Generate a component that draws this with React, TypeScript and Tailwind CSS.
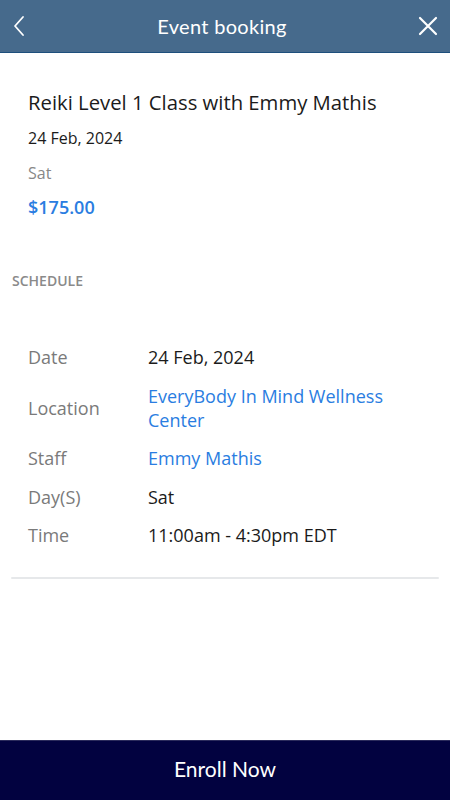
const rows = [
  { label: 'Date', value: '24 Feb, 2024' },
  { label: 'Location', value: 'EveryBody In Mind Wellness Center', link: true },
  { label: 'Staff', value: 'Emmy Mathis', link: true },
  { label: 'Day(S)', value: 'Sat' },
  { label: 'Time', value: '11:00am - 4:30pm EDT' },
];

export default function App() {
  return (
    <main className="flex h-[800px] w-[450px] flex-col bg-white font-['Open_Sans',sans-serif] text-[#1b1b1b]">
      <header className="flex h-[53px] shrink-0 items-center justify-between border-b border-[#1d4f7c] bg-[#466a8c] px-3 text-white">
        <svg width="14" height="22" viewBox="0 0 14 22" fill="none" stroke="white" strokeWidth="1.8" strokeLinecap="round" strokeLinejoin="round">
          <path d="M11 2 L3 11 L11 20" />
        </svg>
        <h1 className="font-['Lato',sans-serif] text-[20px] tracking-[0.3px]">Event booking</h1>
        <svg width="20" height="20" viewBox="0 0 20 20" fill="none" stroke="white" strokeWidth="2.2" strokeLinecap="round">
          <path d="M2 2 L18 18 M18 2 L2 18" />
        </svg>
      </header>

      <section className="px-7 pt-[35px]">
        <h2 className="text-[20.3px] leading-[28px]">Reiki Level 1 Class with Emmy Mathis</h2>
        <p className="mt-[12px] text-[16px] leading-[20px]">24 Feb, 2024</p>
        <p className="mt-[15px] text-[16px] leading-[20px] text-[#888]">Sat</p>
        <p className="mt-[13px] text-[18px] font-semibold leading-[22px] text-[#2a7de1]">$175.00</p>
      </section>

      <p className="mt-[54px] px-3 text-[14px] font-semibold leading-[18px] text-[#8a8a8a]">SCHEDULE</p>

      <div className="mt-[55px] flex flex-col gap-[14.5px] px-7">
        {rows.map((row) => (
          <div className="flex items-center text-[18px] leading-[24px]" key={row.label}>
            <span className="w-[120px] shrink-0 text-[#7a7a7a]">{row.label}</span>
            <span className={row.link ? 'pr-5 text-[#2a7de1]' : 'pr-5'}>{row.value}</span>
          </div>
        ))}
      </div>

      <div className="mx-[11px] mt-[30px] h-[2px] rounded bg-[#e6e8ea]" />

      <div className="flex-1" />
      <button className="flex h-[60px] shrink-0 items-center justify-center border-t border-[#2b2b5c] bg-[#020240] pb-[4px] font-['Lato',sans-serif] text-[21px] text-white">
        Enroll Now
      </button>
    </main>
  );
}
